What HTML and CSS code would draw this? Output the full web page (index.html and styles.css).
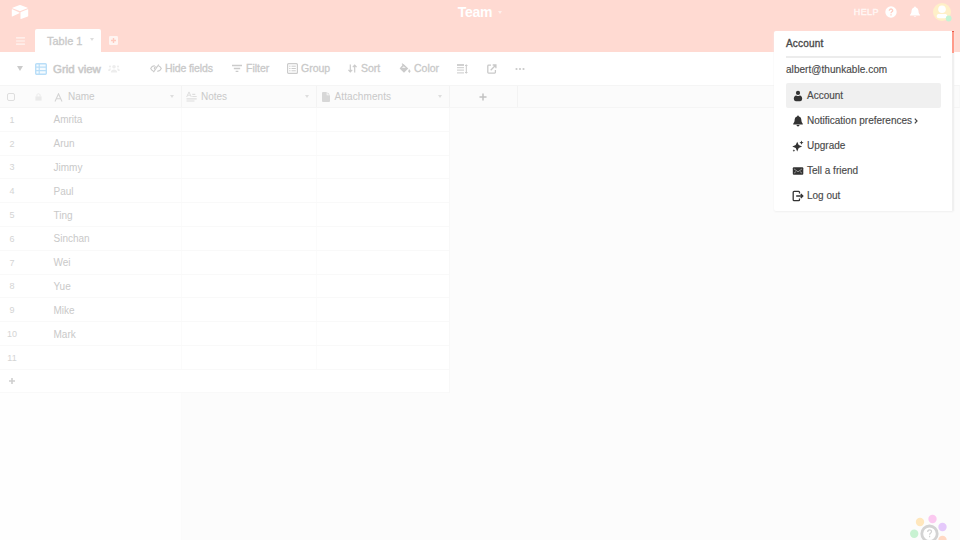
FILE: index.html
```
<!DOCTYPE html>
<html lang="en">
<head>
<meta charset="utf-8">
<title>Team</title>
<link rel="stylesheet" href="styles.css">
</head>
<body>
<div class="app">
  <header class="header">
    <div class="topbar">
      <svg class="logo" viewBox="0 0 18 15"><path d="M8 .3 1.500 2.700q-.6.3 0 .6L8 5.800q1 .4 2 0l6.500-2.500q.6-.3 0-.6L10 .3q-1-.4-2 0zM.8 4.500v6.700q0 .5.500.3l7-3.200q.5-.4 0-.7L1.400 4.200q-.6-.1-.6.3zM9.500 7.300v6.400q0 .5.500.3l6.900-2.600q.3-.1.300-.5V4.600q0-.5-.5-.3L9.900 6.900q-.4.100-.4.400z"/></svg>
      <div class="base-name">Team <i class="caret"></i></div>
      <div class="top-actions">
        <span class="help">HELP</span>
        <svg class="help-icon" viewBox="0 0 12 12"><circle cx="6" cy="6" r="5.700" fill="#fff"/><path d="M4.300 4.800C4.300 2.300 7.800 2.500 7.700 4.600 7.600 5.900 6 5.800 6 7.200M6 8.200v1.300" fill="none" stroke="#ffcfc4" stroke-width="1.300"/></svg>
        <svg class="bell-icon" viewBox="0 0 12 12"><path d="M6 .5c-.6 0-.9.4-.9.9C3.200 1.900 2.600 3.400 2.500 5.300 2.400 7.200 1.800 8 .9 9v.6h10.200V9C10.200 8 9.600 7.200 9.500 5.300 9.400 3.400 8.800 1.900 6.900 1.400c0-.5-.3-.9-.9-.9zM4.600 10.200a1.500 1.300 0 0 0 2.800 0z" fill="#fff"/></svg>
        <svg class="avatar" viewBox="0 0 20 20"><circle cx="9" cy="9" r="9" fill="#fff0c8"/><circle cx="9" cy="6.300" r="3.800" fill="#fff"/><path d="M3.700 13.300c0-3.300 3-2.200 5.300-2.200s5.300-1.100 5.300 2.200c0 1.700-1 1.900-2.300 1.900H6c-1.300 0-2.300-.2-2.300-1.900z" fill="#fff"/><circle cx="15.700" cy="15.500" r="2.900" fill="#c5f4d5"/></svg>
      </div>
    </div>
    <nav class="tabs">
      <svg class="menu-icon" viewBox="0 0 10 9"><path d="M0 1h10M0 4.500h10M0 8h10" stroke="#fff5f2" stroke-width="1.400"/></svg>
      <div class="tab">Table 1 <i class="caret"></i></div>
      <svg class="add-table" viewBox="0 0 9 9"><rect width="9" height="9" rx="1.300" fill="#fff4f1"/><path d="M4.500 2v5M2 4.500h5" stroke="#ffcabe" stroke-width="1.400"/></svg>
    </nav>
  </header>

  <div class="toolbar">
    <i class="caret views"></i>
    <svg class="grid-icon" viewBox="0 0 12 12"><rect x=".7" y=".7" width="10.600" height="10.600" rx="1" fill="#f5fbff" stroke="#b9def8" stroke-width="1.400"/><path d="M4.200 1v10M1 4.200h10M1 7.700h10" stroke="#b9def8" stroke-width="1.200"/></svg>
    <span class="view-name">Grid view</span>
    <svg class="people" viewBox="0 0 12 10"><g fill="#ededed"><circle cx="6" cy="2.800" r="1.800"/><path d="M2.800 8.500c0-4 6.400-4 6.400 0z"/><circle cx="2" cy="2.500" r="1.100"/><circle cx="10" cy="2.500" r="1.100"/><path d="M.2 7c0-2.600 2-2.800 2.800-2.200L2 7zM11.800 7c0-2.600-2-2.800-2.800-2.200L10 7z"/></g></svg>
    <div class="tool hide"><svg viewBox="0 0 12 9"><path d="M4.700 1.600C2.500 1.900 1.200 3.200.7 4.500c.5 1.200 1.500 2.200 2.800 2.700M8.500 1.800c1.300.5 2.300 1.500 2.800 2.700-.5 1.300-1.800 2.600-4 2.900M8.700.5 3.500 8.300M6.300 2.700C4.700 2.600 3.900 4.100 4.600 5.300" fill="none" stroke="#cbcbcb" stroke-width="1.100"/></svg>Hide fields</div>
    <div class="tool filter"><svg viewBox="0 0 11 9"><path d="M0 1.200h11M2 4.500h7M4 7.700h3" stroke="#cbcbcb" stroke-width="1.500"/></svg>Filter</div>
    <div class="tool group"><svg viewBox="0 0 11 11"><rect x=".6" y=".6" width="9.800" height="9.800" rx="1" fill="none" stroke="#cbcbcb" stroke-width="1.200"/><path d="M2.200 3.200h1.300M4.500 3.200h4.300M2.200 5.500h1.300M4.500 5.500h4.300M2.200 7.800h1.300M4.500 7.800h4.300" stroke="#cbcbcb"/></svg>Group</div>
    <div class="tool sort"><svg viewBox="0 0 9 9"><path d="M2.300.5v7M.4 5.800l1.900 2 1.900-2M6.700 8.500v-7M4.800 3.200l1.900-2 1.900 2" fill="none" stroke="#cbcbcb" stroke-width="1.200"/></svg>Sort</div>
    <div class="tool color"><svg viewBox="0 0 12 11"><path d="M4.500 1 9.300 5.600 5 9.800.6 5.500z" fill="#cbcbcb"/><path d="M3 .6 6 3.600M2.200 5.200 4.600 2.600l2.800 2.600" fill="none" stroke="#cbcbcb" stroke-width="1.200"/><path d="M2.800 5h4L4.700 3.300z" fill="#f3f3f3"/><path d="M10.300 6.700c2.200 3.500-2 3.500 0 0z" fill="#cbcbcb" stroke="#cbcbcb"/></svg>Color</div>
    <svg class="height-icon" viewBox="0 0 11 10"><path d="M0 1h7" stroke="#c9c9c9" stroke-width="1.700"/><path d="M0 3.700h7M0 6.200h7M0 8.800h7" stroke="#d5d5d5" stroke-width="1.300"/><path d="M9.300 1v8M8.200 2l1.100-1.300L10.400 2M8.200 8l1.100 1.300L10.400 8" fill="none" stroke="#c9c9c9"/></svg>
    <svg class="share-icon" viewBox="0 0 10 10"><path d="M4 1.200H1.700Q.8 1.200.8 2v6.300q0 .8.800.8h6q.8 0 .8-.8V6M3.700 6.200 8.600 1.300M5.700 1h3.200v3.200" fill="none" stroke="#c9c9c9" stroke-width="1.300"/></svg>
    <svg class="more-icon" viewBox="0 0 10 4"><g fill="#cacaca"><circle cx="1.500" cy="2" r="1.100"/><circle cx="5" cy="2" r="1.100"/><circle cx="8.500" cy="2" r="1.100"/></g></svg>
  </div>

  <main class="sheet">
    <div class="row head">
      <div class="cell name">
        <span class="checkbox"></span>
        <svg class="lock" viewBox="0 0 7 8"><path d="M1.900 3.500V2.300c0-2 3.200-2 3.200 0v1.200" fill="none" stroke="#eaeaea"/><rect x=".4" y="3.400" width="6.200" height="4.200" fill="#eaeaea"/></svg>
        <svg class="type-a" viewBox="0 0 8 9"><path d="M.5 8.500 4 .8l3.500 7.700M1.900 5.800h4.200" fill="none" stroke="#d4d4d4" stroke-width="1.100"/></svg>
        <span>Name</span><i class="caret"></i>
      </div>
      <div class="cell notes"><svg viewBox="0 0 11 11"><path d="M.7 6 3 .9 5.300 6M1.500 4.200h3" fill="none" stroke="#dedede"/><path d="M6.300 3.300h3M6.300 5.500h4.400M.5 7.800h10.200M.5 10h8" stroke="#dedede" stroke-width="1.200"/></svg><span>Notes</span><i class="caret"></i></div>
      <div class="cell files"><svg viewBox="0 0 8 10"><path d="M1 0h3.700v3.300H8V9q0 1-1 1H1Q0 10 0 9V1q0-1 1-1zM5.500.2 7.800 2.500H5.500z" fill="#d7d7d7"/></svg><span>Attachments</span><i class="caret"></i></div>
      <div class="cell add"><svg viewBox="0 0 8 8"><path d="M4 .5v7M.5 4h7" stroke="#c2c2c2" stroke-width="1.500"/></svg></div>
    </div>
    <div class="row"><div class="cell name"><b>1</b>Amrita</div><div class="cell notes"></div><div class="cell files"></div></div>
    <div class="row"><div class="cell name"><b>2</b>Arun</div><div class="cell notes"></div><div class="cell files"></div></div>
    <div class="row"><div class="cell name"><b>3</b>Jimmy</div><div class="cell notes"></div><div class="cell files"></div></div>
    <div class="row"><div class="cell name"><b>4</b>Paul</div><div class="cell notes"></div><div class="cell files"></div></div>
    <div class="row"><div class="cell name"><b>5</b>Ting</div><div class="cell notes"></div><div class="cell files"></div></div>
    <div class="row"><div class="cell name"><b>6</b>Sinchan</div><div class="cell notes"></div><div class="cell files"></div></div>
    <div class="row"><div class="cell name"><b>7</b>Wei</div><div class="cell notes"></div><div class="cell files"></div></div>
    <div class="row"><div class="cell name"><b>8</b>Yue</div><div class="cell notes"></div><div class="cell files"></div></div>
    <div class="row"><div class="cell name"><b>9</b>Mike</div><div class="cell notes"></div><div class="cell files"></div></div>
    <div class="row"><div class="cell name"><b>10</b>Mark</div><div class="cell notes"></div><div class="cell files"></div></div>
    <div class="row"><div class="cell name"><b>11</b></div><div class="cell notes"></div><div class="cell files"></div></div>
    <div class="row new"><svg viewBox="0 0 8 8"><path d="M4 1v6M1 4h6" stroke="#cfcfcf" stroke-width="1.600"/></svg></div>
    <div class="rest"></div>
  </main>

  <aside class="account-menu">
    <h2>Account</h2>
    <p class="email">albert@thunkable.com</p>
    <ul>
      <li class="active"><svg viewBox="0 0 12 12"><circle cx="6" cy="2.900" r="2.100"/><path d="M1.800 8.800C1.800 6.700 2.800 5.700 4.200 5.500q1.800 1 3.600 0C9.200 5.700 10.200 6.700 10.200 8.800q0 2.400-2 2.400H3.800q-2 0-2-2.400z"/></svg>Account</li>
      <li><svg viewBox="0 0 12 12"><path d="M6 .6c-.6 0-.9.400-.9.900C3.300 2 2.700 3.400 2.600 5.300 2.500 7 1.900 7.900 1.200 8.800v.7h9.600v-.7C10.100 7.900 9.500 7 9.400 5.300 9.300 3.400 8.700 2 6.900 1.500c0-.5-.3-.9-.9-.9zM4.500 10a1.500 1.400 0 0 0 3 0z"/></svg>Notification preferences<svg class="chevron" viewBox="0 0 4 6"><path d="M.8.7 3 3 .8 5.300" fill="none" stroke="#444" stroke-width="1.200"/></svg></li>
      <li><svg viewBox="0 0 12 12"><path d="M5.200 1.700 6.700 5.100 10.100 6.600 6.700 8.100 5.200 11.500 3.700 8.100.3 6.600 3.700 5.100zM9.500.5l.6 1.600 1.500.6-1.500.6-.6 1.500-.6-1.500-1.500-.6 1.500-.6zM1.900 9.200l.4 1 .9.400-.9.300-.4 1-.4-1-.9-.3.900-.4z"/></svg>Upgrade</li>
      <li><svg viewBox="0 0 12 12"><rect x=".8" y="2.300" width="10.500" height="7.500" rx="1"/><path d="M2 3.900 6 6.800l4-2.900M2 8.200l2-1.600M10 8.200 8 6.600" fill="none" stroke="#bbb" stroke-width=".7"/></svg>Tell a friend</li>
      <li><svg viewBox="0 0 12 12"><path d="M7.500 3.500V2.200Q7.500 1.300 6.600 1.300H2.100Q1.200 1.300 1.200 2.200v7.600q0 .9.900.9h4.500q.9 0 .9-.9V8.500M4.200 6h6.600M8.800 4l2 2-2 2" fill="none" stroke="#333" stroke-width="1.300"/></svg>Log out</li>
    </ul>
  </aside>

  <svg class="help-bubble" viewBox="0 0 38 26"><circle cx="10" cy="8" r="4.200" fill="#ffe7bd"/><circle cx="22.500" cy="5" r="4.200" fill="#fbc9f0"/><circle cx="32.500" cy="13" r="4.200" fill="#e5c9fb"/><circle cx="4.200" cy="19.700" r="4.200" fill="#c8f2d2"/><circle cx="32.500" cy="26" r="4.200" fill="#ffd9c4"/><circle cx="19.500" cy="19.700" r="7.700" fill="#fff" stroke="#d3d3d3" stroke-width="2.800"/><path d="M17.700 18c0-3 3.900-2.700 3.800-.3-.1 1.300-1.900 1.300-1.900 3M19.600 21.800v1.400" fill="none" stroke="#d3d3d3" stroke-width="1.200"/></svg>
</div>
</body>
</html>
```
FILE: styles.css
```
* { box-sizing: border-box; }
body {
  margin: 0;
  font-family: "Liberation Sans", Arial, sans-serif;
  font-size: 10px;
  color: #c9c9c9;
  background: #fff;
}
svg { display: block; flex: none; }
.app {
  position: relative;
  width: 960px;
  height: 540px;
  overflow: hidden;
  display: flex;
  flex-direction: column;
}
.caret {
  display: inline-block;
  flex: none;
  border: 2.5px solid transparent;
  border-top: 3.5px solid #dedede;
  border-bottom: 0;
}

.header { height: 52px; flex: none; background: #ffdad2; color: #fff; }
.topbar {
  height: 29px;
  padding: 0 8px 5px 11px;
  display: grid;
  grid-template-columns: 1fr auto 1fr;
  align-items: center;
}
.logo { width: 18px; height: 15px; fill: #fff; }
.base-name {
  display: flex;
  align-items: center;
  gap: 6px;
  margin-right: 3px;
  font-size: 14px;
  font-weight: bold;
  line-height: 20px;
  letter-spacing: -.2px;
}
.base-name .caret { border-width: 2px; border-top: 3px solid #fff0ec; border-bottom: 0; }
.top-actions { display: flex; align-items: center; justify-content: flex-end; }
.help { font-size: 9px; letter-spacing: .45px; color: #fff7f5; -webkit-text-stroke: .4px #fff7f5; }
.help-icon { width: 12px; height: 12px; margin-left: 6px; }
.bell-icon { width: 12px; height: 12px; margin: 0 12px; }
.avatar { width: 20px; height: 20px; margin: 2px -1px 0 0; }

.tabs { height: 23px; display: flex; align-items: center; padding-left: 16px; }
.menu-icon { width: 9px; height: 8px; }
.tab {
  width: 66px;
  height: 23px;
  margin: 0 8px 0 10px;
  padding: 1px 7px 0 12px;
  display: flex;
  align-items: center;
  justify-content: space-between;
  border-radius: 2px 2px 0 0;
  background: #fff;
  color: #c9c9c9;
  font-size: 11px;
  -webkit-text-stroke: .3px;
}
.tab .caret { margin-top: -3px; }
.add-table { width: 9px; height: 9px; }

.toolbar {
  height: 33px;
  flex: none;
  display: flex;
  align-items: center;
  padding-left: 17px;
  font-size: 10.5px;
  -webkit-text-stroke: .3px;
}
.views { border-width: 3px; border-top: 5px solid #cbcbcb; border-bottom: 0; }
.grid-icon { width: 12px; height: 12px; margin-left: 12px; }
.view-name { width: 49px; margin-left: 6px; font-size: 11.5px; -webkit-text-stroke: .5px; white-space: nowrap; }
.people { width: 12px; height: 10px; margin-left: 6px; }
.tool { display: flex; align-items: center; white-space: nowrap; height: 20px; padding-bottom: 1px; }
.hide { width: 82px; margin-left: 30px; gap: 3px; letter-spacing: -.1px; }
.hide svg { width: 12px; height: 9px; }
.filter { width: 55px; gap: 4px; }
.filter svg { width: 10px; height: 9px; }
.group { width: 61px; gap: 3px; }
.group svg { width: 11px; height: 11px; }
.sort { width: 51px; gap: 4px; }
.sort svg { width: 9px; height: 9px; }
.color { width: 58px; gap: 3px; }
.color svg { width: 12px; height: 11px; }
.height-icon { width: 11px; height: 10px; }
.share-icon { width: 10px; height: 10px; margin-left: 19px; }
.more-icon { width: 10px; height: 4px; margin-left: 18px; }

.sheet {
  flex: 1;
  display: flex;
  flex-direction: column;
  background: linear-gradient(90deg, #fefefe 181px, #fcfcfc 181px);
}
.row {
  width: 450px;
  height: 23.8px;
  flex: none;
  display: flex;
  background: #fff;
  border-bottom: 1px solid #f9f9f9;
  border-right: 1px solid #f8f8f8;
}
.cell { display: flex; align-items: center; padding-top: 1px; border-right: 1px solid #fbfbfb; }
.name { width: 182px; }
.notes { width: 134.500px; }
.files { flex: 1; border-right: 0; }
.row b { width: 24px; margin-right: 29.500px; text-align: center; font-size: 9px; font-weight: normal; color: #d4d4d4; }
.head {
  width: 100%;
  height: 23px;
  background: #fbfbfb;
  border-top: 1px solid #f5f5f5;
  border-bottom: 1px solid #f5f5f5;
}
.head .cell { border-color: #f3f3f3; }
.head .caret { margin-left: auto; }
.head .name { padding: 0 7px; }
.checkbox { width: 8px; height: 8px; border: 1px solid #dedede; border-radius: 2px; }
.lock { width: 7px; height: 8px; margin-left: 20px; }
.type-a { width: 9px; height: 9px; margin: 1px 5px 0 12px; }
.head .notes { padding: 0 7px 0 4px; }
.notes svg { width: 11px; height: 11px; margin-right: 4px; }
.head .files { flex: none; width: 133px; padding: 0 7px 0 5px; border-right: 1px solid #f3f3f3; }
.files svg { width: 8px; height: 10px; margin-right: 5px; }
.files span { letter-spacing: .1px; }
.add { width: 68px; padding-top: 0; justify-content: center; }
.add svg { width: 8px; height: 8px; }
.new { height: 23px; align-items: center; padding-left: 8px; }
.new svg { width: 8px; height: 8px; }
.rest { width: 182px; flex: 1; border-right: 1px solid #fbfbfb; }

.account-menu {
  position: absolute;
  left: 774px;
  top: 31px;
  width: 180px;
  height: 180px;
  padding: 0 11px 0 12px;
  border-right: 2px solid #f0f0f0;
  border-radius: 2px;
  background: #fff;
  color: #4a4a4a;
  -webkit-text-stroke: .15px;
  box-shadow: 0 1px 2px #f0f0f0;
}
.account-menu::after {
  content: "";
  position: absolute;
  right: -2px;
  top: 0;
  width: 2px;
  height: 21px;
  border-top: 1px solid #e65849;
  background: #ff9b8a;
}
.account-menu h2 {
  height: 27px;
  margin: 0 0 6px;
  padding-top: 6px;
  border-bottom: 2px solid #ececec;
  font-size: 10px;
  font-weight: normal;
  line-height: 13px;
  letter-spacing: .2px;
  -webkit-text-stroke: .35px;
}
.email { margin: 0; height: 19px; font-size: 10px; line-height: 11px; letter-spacing: .05px; }
.account-menu ul { margin: 0; padding: 0; list-style: none; }
.account-menu li { height: 25px; display: flex; align-items: center; padding-left: 6px; gap: 3px; }
.account-menu li svg { width: 12px; height: 12px; fill: #333; }
.account-menu .active { background: #f0f0f0; border-radius: 2px; }
.account-menu .chevron { width: 4px; height: 6px; margin-left: -1px; }

.help-bubble { position: absolute; left: 910px; top: 514px; width: 38px; height: 26px; }
```
